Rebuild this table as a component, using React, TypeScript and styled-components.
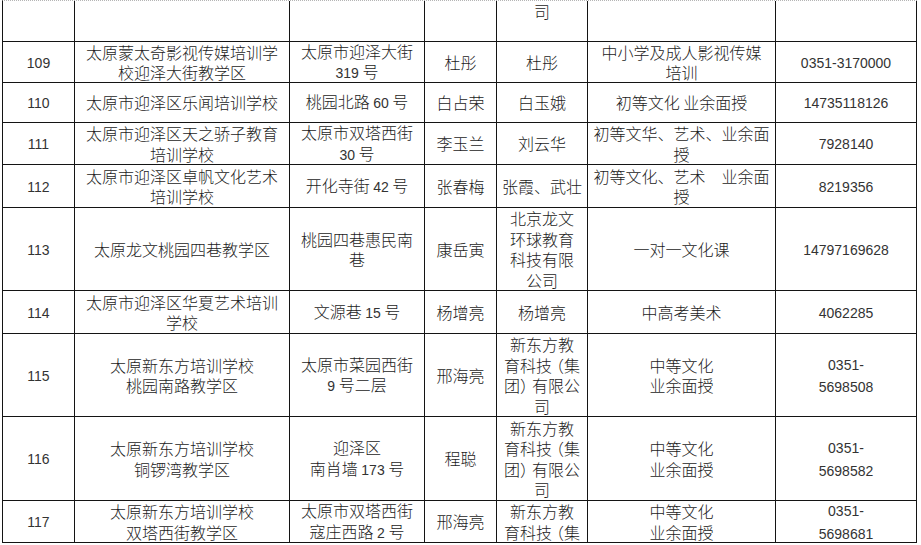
import React from 'react';
import styled, { createGlobalStyle } from 'styled-components';

// Scanned registry table: fixed column/row sizes, each cell centred text.
// A row split by the page break keeps its overflowing cell pinned to the top.

const COLS = [72, 215, 135, 72, 91, 188, 141];
const ROWS = [41, 41, 40, 42, 43, 83, 43, 83, 84, 42];

type CellData = string | { text: string; top: true };

const COMPANY = '新东方教\n育科技（集\n团）有限公\n司';

const DATA: CellData[][] = [
  ['', '', '', '', { text: '司', top: true }, '', ''],
  ['109', '太原蒙太奇影视传媒培训学\n校迎泽大街教学区', '太原市迎泽大街\n319 号', '杜彤', '杜彤', '中小学及成人影视传媒\n培训', '0351-3170000'],
  ['110', '太原市迎泽区乐闻培训学校', '桃园北路 60 号', '白占荣', '白玉娥', '初等文化 业余面授', '14735118126'],
  ['111', '太原市迎泽区天之骄子教育\n培训学校', '太原市双塔西街\n30 号', '李玉兰', '刘云华', '初等文华、艺术、业余面\n授', '7928140'],
  ['112', '太原市迎泽区卓帆文化艺术\n培训学校', '开化寺街 42 号', '张春梅', '张霞、武壮', '初等文化、艺术　业余面\n授', '8219356'],
  ['113', '太原龙文桃园四巷教学区', '桃园四巷惠民南\n巷', '康岳寅', '北京龙文\n环球教育\n科技有限\n公司', '一对一文化课', '14797169628'],
  ['114', '太原市迎泽区华夏艺术培训\n学校', '文源巷 15 号', '杨增亮', '杨增亮', '中高考美术', '4062285'],
  ['115', '太原新东方培训学校\n桃园南路教学区', '太原市菜园西街\n9 号二层', '邢海亮', COMPANY, '中等文化\n业余面授', '0351-\n5698508'],
  ['116', '太原新东方培训学校\n铜锣湾教学区', '迎泽区\n南肖墙 173 号', '程聪', COMPANY, '中等文化\n业余面授', '0351-\n5698582'],
  ['117', '太原新东方培训学校\n双塔西街教学区', '太原市双塔西街\n寇庄西路 2 号', '邢海亮', { text: COMPANY, top: true }, '中等文化\n业余面授', '0351-\n5698681'],
];

const GlobalStyle = createGlobalStyle`
  html, body {
    margin: 0;
    padding: 0;
    background: #fff;
  }
  body {
    font-family: "Noto Sans CJK SC", "Noto Sans", sans-serif;
    color: #1c1c1c;
  }
`;

const Page = styled.div`
  width: 921px;
  height: 545px;
  padding-left: 2px;
  box-sizing: border-box;
  overflow: hidden;
`;

const Sheet = styled.div`
  display: grid;
  grid-template-columns: ${COLS.map((w) => `${w}px`).join(' ')};
  grid-template-rows: ${ROWS.map((h) => `${h}px`).join(' ')};
  width: max-content;
  border-left: 1px solid #141414;
  border-top: 1px dotted #b5b5b5;
`;

const Cell = styled.div<{ $top?: boolean }>`
  box-sizing: border-box;
  display: flex;
  align-items: ${(p) => (p.$top ? 'flex-start' : 'center')};
  justify-content: center;
  padding: 0 3px;
  border-right: 1px solid #141414;
  border-bottom: 1px solid #141414;
  overflow: hidden;
`;

const Text = styled.div`
  font-size: 16px;
  font-weight: 300;
  line-height: 20.5px;
  text-align: center;
  white-space: pre;
`;

const Num = styled.span`
  font-family: "Liberation Sans", Arial, sans-serif;
  font-size: 14px;
  font-weight: 400;
  color: #333;
`;

// full-width brackets sit tight against the character they enclose
const Bracket = styled.span<{ $open?: boolean }>`
  margin: ${(p) => (p.$open ? '0 0 0 -4px' : '0 -4px 0 0')};
`;

function renderText(text: string) {
  return text.split(/([0-9-]+|（|）)/).map((part, i) => {
    if (part === '（') return <Bracket key={i} $open>（</Bracket>;
    if (part === '）') return <Bracket key={i}>）</Bracket>;
    if (/^[0-9-]+$/.test(part)) return <Num key={i}>{part}</Num>;
    return part;
  });
}

export default function App() {
  return (
    <Page>
      <GlobalStyle />
      <Sheet>
        {DATA.map((row, r) =>
          row.map((cell, c) => {
            const text = typeof cell === 'string' ? cell : cell.text;
            const top = typeof cell !== 'string';
            return (
              <Cell key={`${r}-${c}`} $top={top}>
                <Text>{renderText(text)}</Text>
              </Cell>
            );
          }),
        )}
      </Sheet>
    </Page>
  );
}
